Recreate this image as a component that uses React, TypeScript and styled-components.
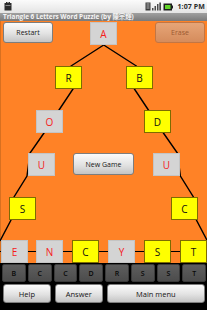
import React from 'react'
import styled, { createGlobalStyle, css } from 'styled-components'

const GlobalStyle = createGlobalStyle`
  html, body {
    margin: 0;
    padding: 0;
    background: #000;
  }
  body {
    width: 207px;
    height: 310px;
    overflow: hidden;
    font-family: 'Open Sans', 'DejaVu Sans', 'Noto Sans CJK TC', sans-serif;
  }
`

type Kind = 'gray' | 'yellow'

interface Cell {
  ch: string
  x: number
  y: number
  kind: Kind
}

const cells: Cell[] = [
  { ch: 'A', x: 90, y: 1, kind: 'gray' },
  { ch: 'R', x: 55, y: 45, kind: 'yellow' },
  { ch: 'B', x: 126, y: 45, kind: 'yellow' },
  { ch: 'O', x: 36, y: 89, kind: 'gray' },
  { ch: 'D', x: 144, y: 89, kind: 'yellow' },
  { ch: 'U', x: 28, y: 132, kind: 'gray' },
  { ch: 'U', x: 153, y: 132, kind: 'gray' },
  { ch: 'S', x: 9, y: 176, kind: 'yellow' },
  { ch: 'C', x: 171, y: 176, kind: 'yellow' },
  { ch: 'E', x: 1, y: 219, kind: 'gray' },
  { ch: 'N', x: 36, y: 219, kind: 'gray' },
  { ch: 'C', x: 72, y: 219, kind: 'yellow' },
  { ch: 'Y', x: 108, y: 219, kind: 'gray' },
  { ch: 'S', x: 144, y: 219, kind: 'yellow' },
  { ch: 'T', x: 180, y: 219, kind: 'yellow' },
]

const keys = ['B', 'C', 'C', 'D', 'R', 'S', 'S', 'T']

// left edge of the triangle, the right one is its mirror
const leftEdge: [number, number][] = [
  [103.7, 24],
  [71, 45],
  [73, 68],
  [59, 89],
  [44, 112],
  [30, 132],
  [27, 155],
  [14, 176],
  [11, 199],
  [0, 220],
]
const rightEdge = leftEdge.map(([x, y]) => [207.4 - x, y] as [number, number])
const toPoints = (pts: [number, number][]) => pts.map((p) => p.join(',')).join(' ')

const Screen = styled.div`
  width: 207px;
  height: 310px;
  display: flex;
  flex-direction: column;
  background: #000;
  overflow: hidden;
`

const StatusBar = styled.div`
  height: 13px;
  flex: none;
  display: flex;
  align-items: center;
  padding: 0 2px 0 4px;
  box-sizing: border-box;
  background: linear-gradient(#fbfbfb, #e4e4e4);
`

const StatusIcons = styled.div`
  margin-left: auto;
  display: flex;
  align-items: center;
  gap: 2px;
`

const Clock = styled.span`
  font-size: 7px;
  font-weight: 700;
  color: #2a2a2a;
  margin-left: 2px;
  letter-spacing: 0.1px;
`

const TitleBar = styled.div`
  height: 8px;
  flex: none;
  padding-left: 3px;
  background: linear-gradient(#a0a0a0, #7a7a7a);
  color: #f4f4f4;
  font-size: 6.4px;
  font-weight: 700;
  line-height: 8px;
  white-space: nowrap;
  overflow: hidden;
`

const Board = styled.div`
  position: relative;
  height: 242px;
  flex: none;
  background: #ff8226;
  box-shadow: inset 1px 0 0 #d87020;
`

const TopControls = styled.div`
  display: flex;
  justify-content: space-between;
  padding: 1px 2px 0 3px;
`

const Lines = styled.svg`
  position: absolute;
  left: 0;
  top: 0;
`

const Button = styled.div<{ $disabled?: boolean }>`
  display: flex;
  align-items: center;
  justify-content: center;
  box-sizing: border-box;
  height: 21px;
  width: 50px;
  border-radius: 3px;
  font-size: 7px;
  color: #151515;
  border: 1px solid #7d7d7d;
  background: linear-gradient(#fbfbfb, #e2e2e2 55%, #c4c4c4);
  ${(p) =>
    p.$disabled &&
    css`
      border-color: #c27644;
      background: linear-gradient(#e6a578, #d58c5c);
      color: #9c5a32;
    `}
`

const NewGame = styled(Button)`
  position: absolute;
  left: 73px;
  top: 132px;
  width: 61px;
  height: 22px;
`

const Tile = styled.div<{ $kind: Kind }>`
  position: absolute;
  width: 27px;
  height: 23px;
  box-sizing: border-box;
  display: flex;
  align-items: center;
  justify-content: center;
  font-size: 10px;
  ${(p) =>
    p.$kind === 'gray'
      ? css`
          background: #d4d4d4;
          border: 1px solid #c4c4c4;
          color: #f4201c;
        `
      : css`
          background: #ffff00;
          border: 1px solid #7e6c00;
          color: #111;
        `}
`

const Tray = styled.div`
  flex: 1;
  display: flex;
  flex-direction: column;
  padding: 1px 1px 0 2px;
  gap: 2px;
`

const KeyRow = styled.div`
  display: flex;
  gap: 2px;
  height: 18px;
`

const Key = styled.div`
  flex: 1;
  display: flex;
  align-items: center;
  justify-content: center;
  border-radius: 2px;
  border: 1px solid #3a3a3a;
  background: linear-gradient(#5e5e5e, #4c4c4c);
  color: #080808;
  font-size: 7px;
  font-weight: 600;
`

const ButtonRow = styled.div`
  display: flex;
  gap: 4px;
  padding: 0 1px 0 1px;
`

const WideButton = styled(Button)<{ $grow: number }>`
  flex: ${(p) => p.$grow};
  width: auto;
  height: 19px;
  font-size: 7.5px;
`

const DataIcon = () => (
  <svg width="16" height="9" viewBox="0 0 16 9">
    <rect x="0.5" y="0.5" width="5" height="8" fill="#3a3a3a" />
    <path d="M1.5 2h3M1.5 4h3M1.5 6h3" stroke="#ddd" strokeWidth="0.8" />
    <path d="M7 8.5h1.5V6H7zM9.5 8.5H11V4H9.5zM12 8.5h1.5V2H12zM14.3 8.5H16V0.5h-1.7z" fill="#4a4a4a" />
  </svg>
)

const BatteryIcon = () => (
  <svg width="10" height="8" viewBox="0 0 10 8">
    <rect x="0.5" y="0.5" width="8.5" height="7" fill="#1e1e1e" />
    <rect x="2" y="2" width="5.5" height="4" fill="#63d42a" />
    <rect x="9" y="2.5" width="1" height="3" fill="#1e1e1e" />
  </svg>
)

const NoticeIcon = () => (
  <svg width="8" height="9" viewBox="0 0 8 9">
    <rect x="0.5" y="1" width="7" height="7.5" fill="#2c2c2c" />
    <rect x="2" y="0" width="1.5" height="2" fill="#2c2c2c" />
    <rect x="4.5" y="0" width="1.5" height="2" fill="#2c2c2c" />
    <rect x="1.5" y="3" width="5" height="1" fill="#8a8a8a" />
  </svg>
)

const App: React.FC = () => {
  return (
    <Screen>
      <GlobalStyle />
      <StatusBar>
        <NoticeIcon />
        <StatusIcons>
          <DataIcon />
          <BatteryIcon />
          <Clock>1:07 PM</Clock>
        </StatusIcons>
      </StatusBar>
      <TitleBar>Triangle 6 Letters Word Puzzle (by 陳宗輝)</TitleBar>
      <Board>
        <Lines width={207} height={242}>
          <polyline points={toPoints(leftEdge)} fill="none" stroke="#000" strokeWidth={1.4} />
          <polyline points={toPoints(rightEdge)} fill="none" stroke="#000" strokeWidth={1.4} />
          <line x1={0} y1={230.5} x2={207} y2={230.5} stroke="#000" strokeWidth={1.2} />
        </Lines>
        <TopControls>
          <Button>Restart</Button>
          <Button $disabled>Erase</Button>
        </TopControls>
        {cells.map((c, i) => (
          <Tile key={i} $kind={c.kind} style={{ left: c.x, top: c.y }}>
            {c.ch}
          </Tile>
        ))}
        <NewGame>New Game</NewGame>
      </Board>
      <Tray>
        <KeyRow>
          {keys.map((k, i) => (
            <Key key={i}>{k}</Key>
          ))}
        </KeyRow>
        <ButtonRow>
          <WideButton $grow={1}>Help</WideButton>
          <WideButton $grow={1}>Answer</WideButton>
          <WideButton $grow={2.1}>Main menu</WideButton>
        </ButtonRow>
      </Tray>
    </Screen>
  )
}

export default App
